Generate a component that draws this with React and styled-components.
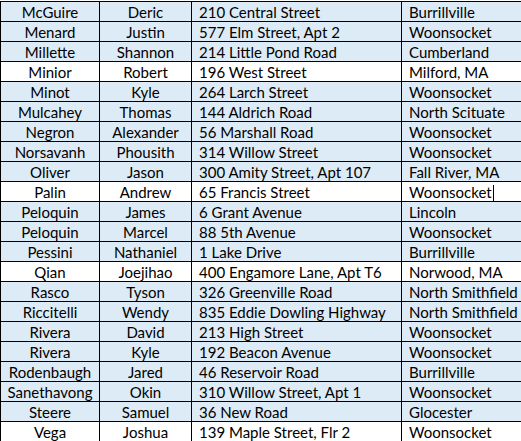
import React from "react";
import styled, { createGlobalStyle } from "styled-components";

const GlobalStyle = createGlobalStyle`
  html, body {
    margin: 0;
    padding: 0;
    background: #ffffff;
    overflow: hidden;
  }
`;

const Sheet = styled.table`
  margin-top: 1px;
  border-collapse: separate;
  border-spacing: 0;
  table-layout: fixed;
  width: 541px;
  border-top: 1px solid #000;
  border-left: 1px solid #000;
  font-family: Lato, "Open Sans", sans-serif;
  font-size: 15px;
  color: #000;
`;

const Column = styled.col`
  width: ${(p) => p.$w}px;
`;

const Row = styled.tr`
  background: ${(p) => (p.$plain ? "#ffffff" : "#ddebf7")};
`;

const Cell = styled.td`
  box-sizing: border-box;
  height: 20px;
  padding: 1px 0 0 ${(p) => (p.$center ? "0" : "7px")};
  border-right: 1px solid #000;
  border-bottom: 1px solid #000;
  text-align: ${(p) => (p.$center ? "center" : "left")};
  white-space: nowrap;
  overflow: hidden;
  line-height: 18px;
`;

const Caret = styled.span`
  display: inline-block;
  width: 1px;
  height: 16px;
  margin-left: 1px;
  vertical-align: -3px;
  background: #000;
`;

const people = [
  ["McGuire", "Deric", "210 Central Street", "Burrillville"],
  ["Menard", "Justin", "577 Elm Street, Apt 2", "Woonsocket"],
  ["Millette", "Shannon", "214 Little Pond Road", "Cumberland"],
  ["Minior", "Robert", "196 West Street", "Milford, MA", true],
  ["Minot", "Kyle", "264 Larch Street", "Woonsocket"],
  ["Mulcahey", "Thomas", "144 Aldrich Road", "North Scituate"],
  ["Negron", "Alexander", "56 Marshall Road", "Woonsocket"],
  ["Norsavanh", "Phousith", "314 Willow Street", "Woonsocket"],
  ["Oliver", "Jason", "300 Amity Street, Apt 107", "Fall River, MA"],
  ["Palin", "Andrew", "65 Francis Street", "Woonsocket", true, true],
  ["Peloquin", "James", "6 Grant Avenue", "Lincoln"],
  ["Peloquin", "Marcel", "88 5th Avenue", "Woonsocket"],
  ["Pessini", "Nathaniel", "1 Lake Drive", "Burrillville"],
  ["Qian", "Joejihao", "400 Engamore Lane, Apt T6", "Norwood, MA", true],
  ["Rasco", "Tyson", "326 Greenville Road", "North Smithfield"],
  ["Riccitelli", "Wendy", "835 Eddie Dowling Highway", "North Smithfield"],
  ["Rivera", "David", "213 High Street", "Woonsocket"],
  ["Rivera", "Kyle", "192 Beacon Avenue", "Woonsocket"],
  ["Rodenbaugh", "Jared", "46 Reservoir Road", "Burrillville"],
  ["Sanethavong", "Okin", "310 Willow Street, Apt 1", "Woonsocket"],
  ["Steere", "Samuel", "36 New Road", "Glocester"],
  ["Vega", "Joshua", "139 Maple Street, Flr 2", "Woonsocket", true],
];

export default function App() {
  return (
    <>
      <GlobalStyle />
      <Sheet>
        <colgroup>
          <Column $w={99} />
          <Column $w={92} />
          <Column $w={210} />
          <Column $w={140} />
        </colgroup>
        <tbody>
          {people.map(([last, first, street, town, plain, caret], i) => (
            <Row key={i} $plain={plain}>
              <Cell $center>{last}</Cell>
              <Cell $center>{first}</Cell>
              <Cell>{street}</Cell>
              <Cell>
                {town}
                {caret && <Caret />}
              </Cell>
            </Row>
          ))}
        </tbody>
      </Sheet>
    </>
  );
}
